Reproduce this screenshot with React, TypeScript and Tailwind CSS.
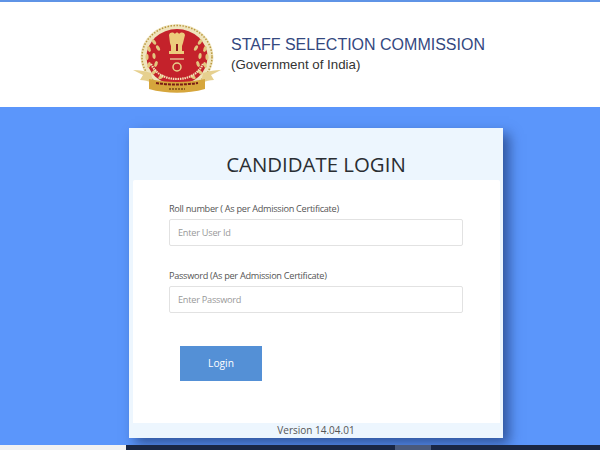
import React from 'react';

const leaves = [
  [21, 20, -35], [16, 27, -20], [14, 35, 0], [16, 43, 20], [21, 50, 40], [28, 55, 60],
  [67, 20, 35], [72, 27, 20], [74, 35, 0], [72, 43, -20], [67, 50, -40], [60, 55, -60],
  [25, 26, -30], [21, 34, -5], [23, 42, 20], [63, 26, 30], [67, 34, 5], [65, 42, -20],
];

const Emblem: React.FC = () => (
  <svg width="88" height="72" viewBox="0 0 88 72">
    <ellipse cx="44" cy="35" rx="36.5" ry="33" fill="#efe4bd" />
    <ellipse cx="44" cy="35" rx="35" ry="31.5" fill="none" stroke="#b9983f" strokeWidth="1.5" strokeDasharray="1.5 1.5" />
    <ellipse cx="44" cy="35" rx="30.5" ry="28" fill="#c4222b" />
    {/* laurel */}
    {leaves.map(([x, y, r]) => (
      <ellipse key={`${x}-${y}`} cx={x} cy={y} rx="1.6" ry="3" fill="#e3c77f" transform={`rotate(${r} ${x} ${y})`} />
    ))}
    {/* lion capital */}
    <path d="M36 13c1-3 4-3 6-1 1-2 3-2 4 0 2-2 5-2 6 1l-2 8-1 3v5h2v3H36v-3h2v-5l-1-3z" fill="#eccb7c" />
    <path d="M43 22h2v7h-2z" fill="#8f1a1e" />
    <path d="M37 37h14" stroke="#f0dca6" strokeWidth="1.2" />
    <circle cx="44" cy="45" r="4" fill="#c4222b" stroke="#e8cf8a" strokeWidth="1.5" />
    {/* curved lettering band */}
    <path d="M18 42c5 10 14 15 26 15s21-5 26-15" fill="none" stroke="#f3e3b6" strokeWidth="2.2" strokeDasharray="1.5 0.8" />
    {/* ribbon */}
    <path d="M0 48c6 0 12 1 18 3l2 10c-5-2-9-3-13-3l3-5z" fill="#e6d08f" />
    <path d="M88 48c-6 0-12 1-18 3l-2 10c5-2 9-3 13-3l-3-5z" fill="#e6d08f" />
    <path d="M16 57c18 4 38 4 56 0v10c-18 5-38 5-56 0z" fill="#d6a63c" />
    <path d="M23 61c14 2 28 2 42 0" fill="none" stroke="#7a1c16" strokeWidth="2" strokeDasharray="3 1" />
    <path d="M36 67h16" stroke="#7a4a16" strokeWidth="1.5" strokeDasharray="2 1" />
  </svg>
);

const Field: React.FC<{ label: string; placeholder: string; className?: string }> = ({ label, placeholder, className }) => (
  <div className={className}>
    <label className="block text-[9.2px] tracking-[-0.3px] leading-[14px] text-[#555] mb-[3px]">{label}</label>
    <input
      className="block w-[294px] h-[27px] px-[8px] border border-[#e2e2e2] rounded-[2px] bg-white text-[9.2px] tracking-[-0.25px] outline-none placeholder:text-[#999]"
      placeholder={placeholder}
      readOnly
    />
  </div>
);

export default function App() {
  return (
    <div className="w-[600px] h-[450px] overflow-hidden flex flex-col bg-[#5b96fb] font-['Open_Sans',sans-serif]">
      <header className="h-[107px] shrink-0 bg-white border-t-2 border-[#5f94e6] flex items-start">
        <div className="ml-[133px] mt-[20px]">
          <Emblem />
        </div>
        <div className="ml-[10px] mt-[33px] font-['Liberation_Sans',sans-serif]">
          <div className="text-[16px] leading-[20px] text-[#34487f] whitespace-nowrap">STAFF SELECTION COMMISSION</div>
          <div className="text-[13.3px] leading-[18px] mt-[1px] text-[#333] whitespace-nowrap">(Government of India)</div>
        </div>
      </header>

      <main className="flex-1 min-h-0 pt-[21px] pl-[129px]">
        <div className="w-[374px] h-[310px] bg-[#edf6fe] flex flex-col shadow-[6px_6px_12px_rgba(20,40,90,0.6)]">
          <h1 className="h-[52px] shrink-0 pt-[21px] text-center text-[20.4px] leading-[30px] font-medium text-[#2a2e33]">
            CANDIDATE LOGIN
          </h1>
          <div className="ml-[4px] mr-[3px] h-[243px] shrink-0 bg-white rounded-t-[2px] pt-[22px] pl-[36px]">
            <Field label="Roll number ( As per Admission Certificate)" placeholder="Enter User Id" />
            <Field label="Password (As per Admission Certificate)" placeholder="Enter Password" className="mt-[23px]" />
            <button className="block mt-[33px] ml-[11px] w-[82px] h-[35px] bg-[#5490d6] text-white text-[10.2px]">Login</button>
          </div>
          <div className="flex-1 text-center text-[10px] leading-[15px] text-[#555]">Version 14.04.01</div>
        </div>
      </main>

      <footer className="h-[5px] shrink-0 flex">
        <div className="w-[126px] bg-[#f2f2f2]" />
        <div className="w-[269px] bg-[#1a2744]" />
        <div className="w-[36px] bg-[#4a5a7c]" />
        <div className="flex-1 bg-[#1a2744]" />
      </footer>
    </div>
  );
}
